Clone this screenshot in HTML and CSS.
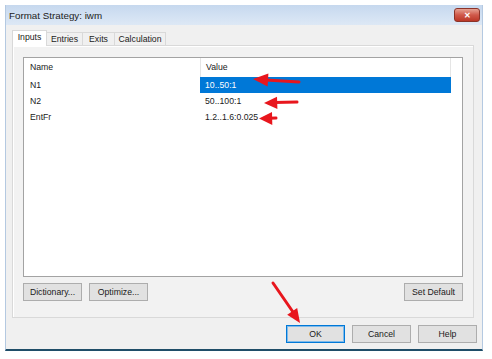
FILE: index.html
```html
<!DOCTYPE html>
<html lang="en">
<head>
    <meta charset="UTF-8">
    <title>Format Strategy: iwm</title>
    <link rel="stylesheet" href="styles.css">
</head>
<body>

    <!-- Dialog window -->
    <div class="window">
        <div class="title-bar">
            <span class="title">Format Strategy: iwm</span>
            <button type="button" class="close-btn">&#x2715;</button>
        </div>

        <div class="client">
            <!-- Tabs -->
            <div class="tabs">
                <div class="tab active tab-inputs">Inputs</div>
                <div class="tab tab-entries">Entries</div>
                <div class="tab tab-exits">Exits</div>
                <div class="tab tab-calc">Calculation</div>
            </div>

            <!-- Tab page -->
            <div class="tab-page">
                <div class="list-view">
                    <div class="list-head">
                        <div class="col-name">Name</div>
                        <div class="col-value">Value</div>
                    </div>
                    <div class="list-row">
                        <div class="col-name">N1</div>
                        <div class="col-value selected">10..50:1</div>
                    </div>
                    <div class="list-row">
                        <div class="col-name">N2</div>
                        <div class="col-value">50..100:1</div>
                    </div>
                    <div class="list-row">
                        <div class="col-name">EntFr</div>
                        <div class="col-value">1.2..1.6:0.025</div>
                    </div>
                </div>
                <div class="page-buttons">
                    <button type="button" class="btn">Dictionary...</button>
                    <button type="button" class="btn">Optimize...</button>
                    <button type="button" class="btn push-right">Set Default</button>
                </div>
            </div>

            <!-- Dialog buttons -->
            <div class="dialog-buttons">
                <button type="button" class="btn btn-default">OK</button>
                <button type="button" class="btn">Cancel</button>
                <button type="button" class="btn">Help</button>
            </div>
        </div>
    </div>

    <!-- Red annotation arrows drawn over the screenshot -->
    <svg class="annotations" width="492" height="359" viewBox="0 0 492 359">
        <g stroke="#e8161d" stroke-width="3" stroke-linecap="round" fill="#e8161d">
            <line x1="299" y1="82" x2="266" y2="80"/>
            <polygon stroke="none" points="253,79 268.4,73.5 267.6,86.5"/>

            <line x1="297" y1="102" x2="274" y2="102.5"/>
            <polygon stroke="none" points="264,103 277,96.8 277.4,109"/>

            <line x1="276" y1="118" x2="268" y2="118.2"/>
            <polygon stroke="none" points="259,118.5 272,112 272.3,125"/>

            <line x1="273" y1="283" x2="293" y2="312"/>
            <polygon stroke="none" points="300,323 287.2,314.8 297.2,308"/>
        </g>
    </svg>

</body>
</html>
```

FILE: styles.css
```css
body {
    margin: 0;
    background: #ffffff;
    font-family: "Liberation Sans", Arial, sans-serif;
    font-size: 8.7px;
    color: #1a1a1a;
}
.window {
    margin: 5px 0 0 5px;
    width: 476px;
    border: 1px solid #b4c9e1;
    border-top: none;
    border-bottom: 2px solid #1f4d68;
    background: #f0f0f0;
}
.title-bar {
    display: flex;
    align-items: flex-start;
    height: 20px;
    background: linear-gradient(180deg, #c6d8ee 0%, #d4e2f3 60%, #dde8f5 100%);
}
.title {
    font-size: 9.8px;
    color: #222;
    margin: 5px 0 0 3px;
}
.close-btn {
    margin: 3px 2px 0 auto;
    width: 26px;
    height: 14px;
    padding: 0;
    border: 1px solid #8b3328;
    border-radius: 3px;
    background: linear-gradient(180deg, #e6a293 0%, #d0594a 50%, #bb3727 100%);
    color: #fff;
    font-size: 8px;
    font-weight: bold;
    line-height: 11px;
}
.client {
    display: flex;
    flex-direction: column;
    padding: 5px 5px 6px 6px;
}
.tabs {
    display: flex;
    align-items: flex-end;
    height: 15px;
}
.tab {
    box-sizing: border-box;
    height: 13px;
    border: 1px solid #d9d9d9;
    border-bottom: none;
    border-left: none;
    background: #f0f0f0;
    padding-top: 1px;
    text-align: center;
    color: #1a1a1a;
}
.tab.active {
    height: 16px;
    margin-bottom: -1px;
    border-left: 1px solid #d9d9d9;
    background: #ffffff;
    position: relative;
    padding-top: 1px;
}
.tab-inputs { width: 35px; }
.tab-entries { width: 36px; }
.tab-exits { width: 32px; }
.tab-calc { width: 51px; }
.tab-page {
    box-sizing: border-box;
    width: 462px;
    height: 273px;
    border: 1px solid #d9d9d9;
    box-shadow: inset 1px 1px 0 #ffffff;
    background: #f2f2f2;
    padding: 11px 10px 0 10px;
}
.list-view {
    box-sizing: border-box;
    height: 220px;
    border: 1px solid #a3a3a3;
    background: #ffffff;
}
.list-head, .list-row {
    display: grid;
    grid-template-columns: 176px 251px;
}
.list-head {
    height: 19px;
    line-height: 18px;
}
.list-head .col-value {
    border-left: 1px solid #e5e5e5;
    border-right: 1px solid #e5e5e5;
}
.list-row {
    height: 16px;
    line-height: 16px;
}
.col-name {
    padding-left: 6px;
}
.col-value {
    padding-left: 5px;
}
.selected {
    background: #0078d7;
    color: #ffffff;
}
.page-buttons {
    display: flex;
    gap: 7px;
    margin-top: 6px;
}
.btn {
    box-sizing: border-box;
    width: 59px;
    height: 18px;
    padding: 0;
    border: 1px solid #adadad;
    background: #e1e1e1;
    font-family: "Liberation Sans", Arial, sans-serif;
    font-size: 8.7px;
    color: #1a1a1a;
}
.push-right {
    margin-left: auto;
}
.dialog-buttons {
    display: flex;
    justify-content: flex-end;
    gap: 7px;
    margin-top: 7px;
}
.btn-default {
    border: 1px solid #0078d7;
    box-shadow: inset 0 0 0 1px #7fbaea;
}
.annotations {
    position: absolute;
    left: 0;
    top: 0;
    pointer-events: none;
}
```
